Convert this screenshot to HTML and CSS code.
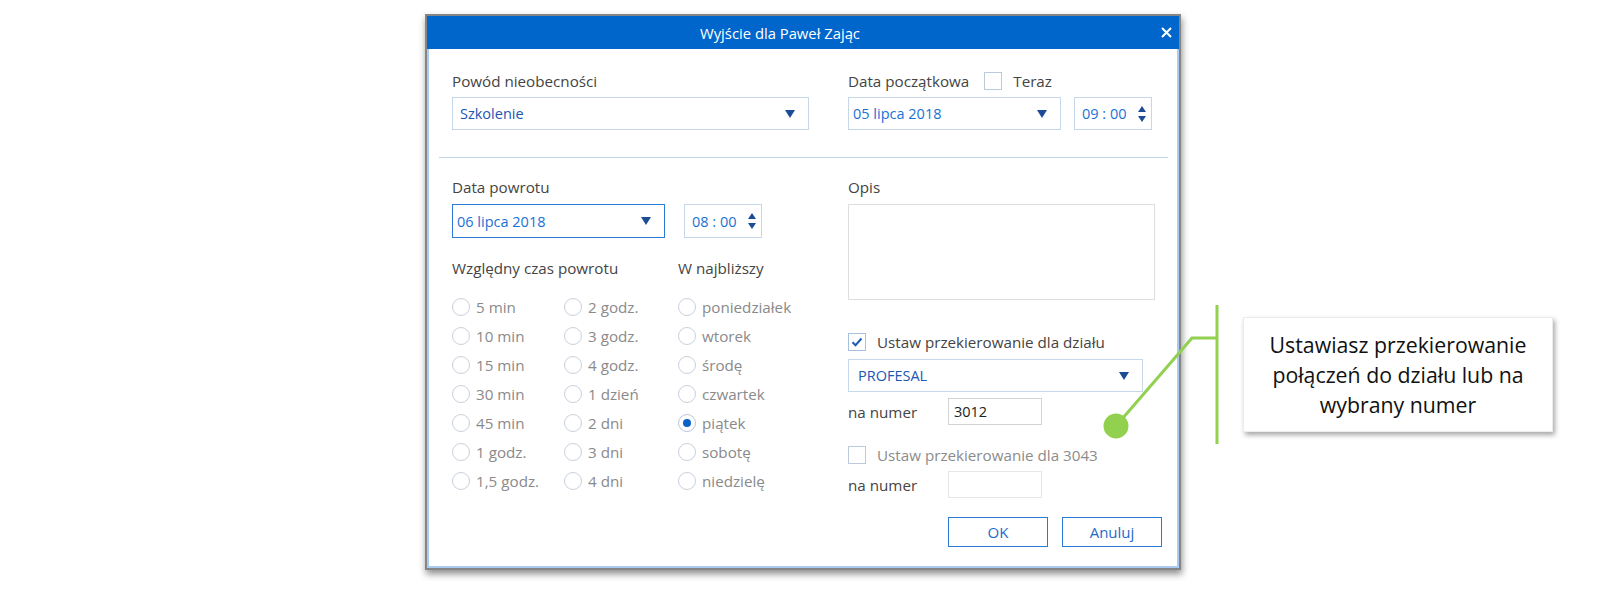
FILE: index.html
```html
<!DOCTYPE html>
<html lang="pl">
<head>
<meta charset="utf-8">
<title>Wyjście</title>
<link rel="stylesheet" href="styles.css">
</head>
<body>
<div class="page">
  <div class="dialog">
    <div class="titlebar">
      <div class="title">Wyjście dla Paweł Zając</div>
      <div class="close">
        <svg width="11" height="11" viewBox="0 0 11 11"><path d="M1 1L10 10M10 1L1 10" stroke="#fff" stroke-width="2" fill="none"/></svg>
      </div>
    </div>
    <div class="body">
      <div class="section section-top">
        <div class="col">
          <div class="label">Powód nieobecności</div>
          <div class="select select-wide"><span class="val dark">Szkolenie</span><span class="arrow"></span></div>
        </div>
        <div class="col">
          <div class="label-row">
            <span class="label">Data początkowa</span>
            <span class="checkbox"></span>
            <span class="label">Teraz</span>
          </div>
          <div class="field-row gap13">
            <div class="select select-date"><span class="val">05 lipca 2018</span><span class="arrow"></span></div>
            <div class="time"><span class="val">09 : 00</span><span class="spin"><i class="up"></i><i class="down"></i></span></div>
          </div>
        </div>
      </div>
      <div class="divider"></div>
      <div class="section section-bottom">
        <div class="col">
          <div class="label">Data powrotu</div>
          <div class="field-row gap19">
            <div class="select select-date focused"><span class="val">06 lipca 2018</span><span class="arrow"></span></div>
            <div class="time time-tall"><span class="val">08 : 00</span><span class="spin"><i class="up"></i><i class="down"></i></span></div>
          </div>
          <div class="radio-heads">
            <div class="label">Względny czas powrotu</div>
            <div class="label">W najbliższy</div>
          </div>
          <div class="radios">
            <div class="radio"><span class="dot"></span>5 min</div>
            <div class="radio"><span class="dot"></span>10 min</div>
            <div class="radio"><span class="dot"></span>15 min</div>
            <div class="radio"><span class="dot"></span>30 min</div>
            <div class="radio"><span class="dot"></span>45 min</div>
            <div class="radio"><span class="dot"></span>1 godz.</div>
            <div class="radio"><span class="dot"></span>1,5 godz.</div>
            <div class="radio"><span class="dot"></span>2 godz.</div>
            <div class="radio"><span class="dot"></span>3 godz.</div>
            <div class="radio"><span class="dot"></span>4 godz.</div>
            <div class="radio"><span class="dot"></span>1 dzień</div>
            <div class="radio"><span class="dot"></span>2 dni</div>
            <div class="radio"><span class="dot"></span>3 dni</div>
            <div class="radio"><span class="dot"></span>4 dni</div>
            <div class="radio"><span class="dot"></span>poniedziałek</div>
            <div class="radio"><span class="dot"></span>wtorek</div>
            <div class="radio"><span class="dot"></span>środę</div>
            <div class="radio"><span class="dot"></span>czwartek</div>
            <div class="radio"><span class="dot on"></span>piątek</div>
            <div class="radio"><span class="dot"></span>sobotę</div>
            <div class="radio"><span class="dot"></span>niedzielę</div>
          </div>
        </div>
        <div class="col">
          <div class="label">Opis</div>
          <div class="textarea"></div>
          <div class="check-row first">
            <span class="checkbox checked">
              <svg width="12" height="10" viewBox="0 0 12 10"><path d="M1.5 5.2L4.5 8.2L10.5 1.5" stroke="#1a5fb4" stroke-width="2" fill="none"/></svg>
            </span>
            <span class="label">Ustaw przekierowanie dla działu</span>
          </div>
          <div class="select select-dept"><span class="val dark">PROFESAL</span><span class="arrow"></span></div>
          <div class="num-row">
            <span class="label num-label">na numer</span>
            <div class="input">3012</div>
          </div>
          <div class="check-row second">
            <span class="checkbox"></span>
            <span class="label muted">Ustaw przekierowanie dla 3043</span>
          </div>
          <div class="num-row second">
            <span class="label num-label">na numer</span>
            <div class="input disabled"></div>
          </div>
          <div class="buttons">
            <div class="btn">OK</div>
            <div class="btn">Anuluj</div>
          </div>
        </div>
      </div>
    </div>
  </div>

  <svg class="annot" width="1611" height="591" viewBox="0 0 1611 591">
    <line x1="1217" y1="305" x2="1217" y2="444" stroke="#92d050" stroke-width="3"/>
    <polyline points="1217,338 1192,338 1116,426" stroke="#92d050" stroke-width="3" fill="none"/>
    <circle cx="1116" cy="426" r="12.5" fill="#92d050"/>
  </svg>
  <div class="callout">Ustawiasz przekierowanie<br>połączeń do działu lub na<br>wybrany numer</div>
</div>
</body>
</html>
```
FILE: styles.css
```css
* { box-sizing: border-box; }
html, body { margin: 0; padding: 0; background: #fff; }
body { font-family: "Open Sans", "Noto Sans", sans-serif; color: #444; }

.page {
  position: relative;
  width: 1611px;
  height: 591px;
  padding: 14px 0 0 425px;
  overflow: hidden;
}

.dialog {
  width: 756px;
  height: 556px;
  border: 2px solid #858585;
  background: #fff;
  display: flex;
  flex-direction: column;
  box-shadow: 1px 4px 7px rgba(0,0,0,0.45);
}

.titlebar {
  height: 33px;
  flex: none;
  background: #0066cc;
  color: #fff;
  display: flex;
  align-items: center;
}
.title {
  flex: 1;
  text-align: center;
  padding-right: 20px;
  font-size: 14.8px;
}
.close {
  width: 26px;
  height: 33px;
  display: flex;
  align-items: center;
  justify-content: center;
}

.body {
  flex: 1;
  border: 2px solid #a9cbf0;
  border-top: 0;
}

.section {
  display: grid;
  grid-template-columns: 396px 1fr;
  padding-left: 23px;
}
.section-top { padding-top: 22px; }
.section-bottom { padding-top: 19px; }

.label {
  font-size: 15.2px;
  line-height: 20px;
  color: #444;
  white-space: nowrap;
}
.label.muted { color: #8c8c8c; }

.label-row {
  display: flex;
  align-items: center;
  height: 20px;
}
.label-row .checkbox { margin: 0 11px 0 15px; }

.checkbox {
  width: 18px;
  height: 18px;
  border: 1px solid #bccbdc;
  background: #fff;
  display: inline-flex;
  align-items: center;
  justify-content: center;
  flex: none;
}
.checkbox.checked { border-color: #a9c0dc; }

.select {
  margin-top: 6px;
  height: 33px;
  border: 1px solid #c7d7ea;
  display: flex;
  align-items: center;
  justify-content: space-between;
  padding: 0 13px 0 7px;
  font-size: 14.5px;
}
.select .val { color: #1a72d6; }
.select .val.dark { color: #1d55b5; }
.select-wide { width: 357px; }
.select-date { width: 213px; padding-left: 4px; margin-top: 0; }
.select-date.focused { border: 1.5px solid #2b7bd6; height: 34px; }
.select-dept { width: 295px; margin-top: 7px; padding-left: 9px; }

.arrow {
  width: 0;
  height: 0;
  border-left: 5.5px solid transparent;
  border-right: 5.5px solid transparent;
  border-top: 8px solid #1c4c96;
}

.field-row {
  display: flex;
  margin-top: 6px;
}
.gap13 { gap: 13px; }
.gap19 { gap: 19px; margin-top: 7px; }

.time {
  width: 78px;
  height: 33px;
  border: 1px solid #c7d7ea;
  display: flex;
  align-items: center;
  justify-content: space-between;
  padding: 0 5px 0 7px;
  font-size: 14.5px;
  color: #1a72d6;
}
.time-tall { height: 34px; }
.spin {
  display: flex;
  flex-direction: column;
  gap: 4px;
}
.spin .up {
  width: 0; height: 0;
  border-left: 4px solid transparent;
  border-right: 4px solid transparent;
  border-bottom: 6px solid #1c4c96;
}
.spin .down {
  width: 0; height: 0;
  border-left: 4px solid transparent;
  border-right: 4px solid transparent;
  border-top: 6px solid #1c4c96;
}

.divider {
  height: 1px;
  background: #c3d5ea;
  margin: 27px 9px 0 10px;
}

.radio-heads {
  display: grid;
  grid-template-columns: 226px auto;
  margin-top: 20px;
}

.radios {
  margin-top: 14px;
  display: grid;
  grid-template-columns: 112px 114px auto;
  grid-template-rows: repeat(7, 29px);
  grid-auto-flow: column;
}
.radio {
  display: flex;
  align-items: center;
  font-size: 15.2px;
  color: #8a8a8a;
  white-space: nowrap;
}
.dot {
  width: 18px;
  height: 18px;
  border: 1px solid #c9d1dc;
  border-radius: 50%;
  margin-right: 6px;
  display: flex;
  align-items: center;
  justify-content: center;
  flex: none;
}
.dot.on { border-color: #b9c7d8; }
.dot.on::after {
  content: "";
  width: 8px;
  height: 8px;
  border-radius: 50%;
  background: #0a62c8;
}

.textarea {
  margin-top: 7px;
  width: 307px;
  height: 96px;
  border: 1.5px solid #dedede;
}

.check-row {
  display: flex;
  align-items: center;
  height: 20px;
  gap: 11px;
}
.check-row.first { margin-top: 32px; }
.check-row.second { margin-top: 20px; }

.num-row {
  display: flex;
  align-items: center;
  margin-top: 6px;
}
.num-row.second { margin-top: 6px; }
.num-label { width: 100px; }
.input {
  width: 94px;
  height: 27px;
  border: 1px solid #d3d3d3;
  font-size: 14.5px;
  color: #222;
  padding-left: 5px;
  display: flex;
  align-items: center;
}
.input.disabled { border-color: #e6e6e6; }

.buttons {
  display: flex;
  gap: 14px;
  padding-left: 100px;
  margin-top: 19px;
}
.btn {
  width: 100px;
  height: 30px;
  border: 1.5px solid #2c7ad4;
  color: #1e6bcb;
  font-size: 15px;
  display: flex;
  align-items: center;
  justify-content: center;
}

.annot {
  position: absolute;
  left: 0;
  top: 0;
  pointer-events: none;
}

.callout {
  position: absolute;
  left: 1243px;
  top: 317px;
  width: 310px;
  height: 115px;
  background: #fff;
  box-shadow: 2px 3px 5px rgba(0,0,0,0.35);
  border: 1px solid #ececec;
  display: flex;
  align-items: center;
  justify-content: center;
  text-align: center;
  font-family: "Open Sans", sans-serif;
  font-size: 21.3px;
  line-height: 30px;
  color: #111;
}
```
